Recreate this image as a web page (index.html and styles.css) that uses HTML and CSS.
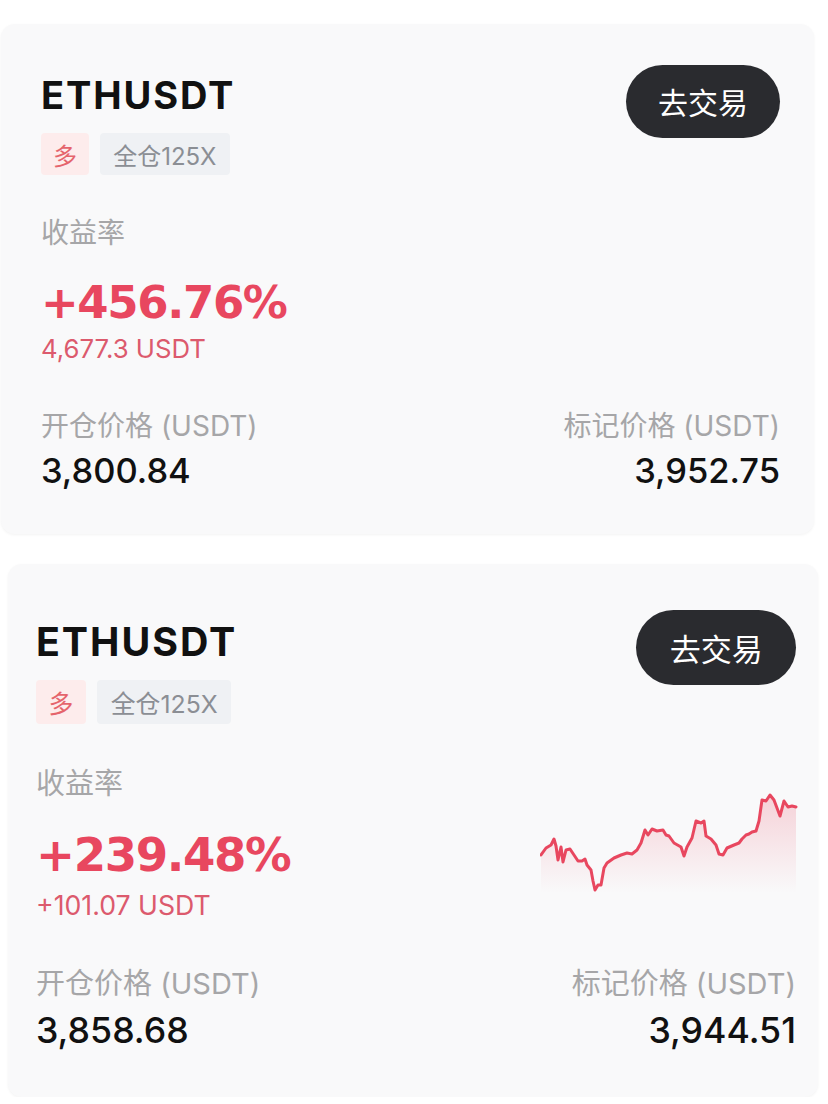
FILE: index.html
```html
<!DOCTYPE html>
<html lang="zh-CN">

<head>
  <meta charset="UTF-8" />
  <meta name="viewport" content="width=device-width, initial-scale=1.0" />
  <title>持仓分享</title>
  <link rel="stylesheet" href="styles.css">
</head>

<body>
  <div class="cards">
    <!-- First position card -->
    <div class="card card-a">
      <div class="card-head">
        <div>
          <h2 class="symbol">ETHUSDT</h2>
          <div class="tags">
            <span class="tag tag-long">多</span>
            <span class="tag tag-mode">全仓125X</span>
          </div>
        </div>
        <button class="trade-button">去交易</button>
      </div>
      <div class="pnl-row">
        <div>
          <div class="label">收益率</div>
          <div class="pnl-rate">+456.76%</div>
          <div class="pnl-amount">4,677.3 USDT</div>
        </div>
      </div>
      <div class="price-row">
        <div>
          <div class="label">开仓价格 (USDT)</div>
          <div class="price">3,800.84</div>
        </div>
        <div class="align-right">
          <div class="label">标记价格 (USDT)</div>
          <div class="price">3,952.75</div>
        </div>
      </div>
    </div>

    <!-- Second position card, with price chart -->
    <div class="card card-b">
      <div class="card-head">
        <div>
          <h2 class="symbol">ETHUSDT</h2>
          <div class="tags">
            <span class="tag tag-long">多</span>
            <span class="tag tag-mode">全仓125X</span>
          </div>
        </div>
        <button class="trade-button">去交易</button>
      </div>
      <div class="pnl-row">
        <div>
          <div class="label">收益率</div>
          <div class="pnl-rate">+239.48%</div>
          <div class="pnl-amount">+101.07 USDT</div>
        </div>
        <svg class="spark" viewBox="0 0 258 100" width="258" height="100">
          <defs>
            <linearGradient id="sparkFill" x1="0" y1="0" x2="0" y2="1">
              <stop offset="0" stop-color="#e8475f" stop-opacity="0.22" />
              <stop offset="1" stop-color="#e8475f" stop-opacity="0" />
            </linearGradient>
          </defs>
          <path fill="url(#sparkFill)" d="M1 62 L6 55 L11 52 L14 46 L16 53 L18 67 L21 54 L23 69 L26 57 L30 56 L34 62 L38 68 L42 68 L45 66 L47 72 L51 77 L53 88 L55 97 L58 92 L61 92 L64 75 L67 70 L74 65 L81 62 L87 60 L92 61 L97 57 L101 50 L105 37 L108 42 L112 36 L117 38 L123 37 L126 42 L129 43 L134 50 L141 54 L144 63 L147 54 L152 45 L156 28 L161 30 L164 28 L166 43 L171 46 L176 52 L179 61 L183 62 L187 55 L194 52 L199 50 L202 46 L206 42 L209 41 L212 39 L216 38 L219 28 L222 7 L226 8 L230 2 L234 7 L240 23 L244 8 L248 14 L252 13 L256 14 L256 100 L1 100 Z" />
          <polyline fill="none" stroke="#e8475f" stroke-width="3" stroke-linejoin="round" stroke-linecap="round" points="1,62 6,55 11,52 14,46 16,53 18,67 21,54 23,69 26,57 30,56 34,62 38,68 42,68 45,66 47,72 51,77 53,88 55,97 58,92 61,92 64,75 67,70 74,65 81,62 87,60 92,61 97,57 101,50 105,37 108,42 112,36 117,38 123,37 126,42 129,43 134,50 141,54 144,63 147,54 152,45 156,28 161,30 164,28 166,43 171,46 176,52 179,61 183,62 187,55 194,52 199,50 202,46 206,42 209,41 212,39 216,38 219,28 222,7 226,8 230,2 234,7 240,23 244,8 248,14 252,13 256,14" />
        </svg>
      </div>
      <div class="price-row">
        <div>
          <div class="label">开仓价格 (USDT)</div>
          <div class="price">3,858.68</div>
        </div>
        <div class="align-right">
          <div class="label">标记价格 (USDT)</div>
          <div class="price">3,944.51</div>
        </div>
      </div>
    </div>
  </div>
</body>

</html>
```

FILE: styles.css
```css
* {
  box-sizing: border-box;
}

body {
  margin: 0;
  background: #ffffff;
  font-family: Inter, "Noto Sans CJK SC", sans-serif;
  color: #111111;
}

.cards {
  display: flex;
  flex-direction: column;
  gap: 30px;
  padding-top: 24px;
}

.card {
  background: #f9f9fa;
  border-radius: 14px;
  box-shadow: 0 1px 3px rgba(0, 0, 0, 0.05);
}

.card-a {
  width: 813px;
  margin-left: 1px;
  padding: 41px 34px 42px 40px;
  font-size: 28px;
}

.card-b {
  width: 810px;
  margin-left: 8px;
  padding: 46px 22px 45px 28px;
  font-size: 29px;
}

.card-head {
  display: flex;
  justify-content: space-between;
  align-items: flex-start;
}

.symbol {
  margin: 0.214em 0 0;
  font-size: 1.357em;
  line-height: 1.21;
  font-weight: 700;
  letter-spacing: 0.05em;
  color: #111111;
}

.tags {
  display: flex;
  gap: 0.393em;
  margin-top: 0.5em;
}

.tag {
  display: flex;
  align-items: center;
  height: 1.75em;
  border-radius: 4px;
  font-size: 0.857em;
}

.tag-long {
  padding: 0 0.5em;
  background: #fdecec;
  color: #e5646c;
}

.tag-mode {
  padding: 0 0.55em;
  background: #eff1f4;
  color: #8b8e94;
}

.trade-button {
  height: 2.433em;
  padding: 0 1.07em;
  border: none;
  border-radius: 999px;
  background: #2a2b2f;
  color: #ffffff;
  font-family: inherit;
  font-size: 1.071em;
}

.label {
  font-size: 1em;
  line-height: 1.286em;
  color: #a6a6a8;
}

.pnl-row {
  display: flex;
  justify-content: space-between;
  align-items: center;
  margin-top: 1.429em;
}

.pnl-rate {
  margin-top: 0.578em;
  font-family: "DejaVu Sans", Inter, sans-serif;
  font-weight: 700;
  font-size: 1.607em;
  line-height: 1.156;
  letter-spacing: -0.03em;
  color: #e8475f;
}

.pnl-amount {
  margin-top: 0.2em;
  font-size: 0.92em;
  line-height: 1.2;
  color: #dc5a6d;
}

.spark {
  display: block;
  margin-right: -2px;
}

.price-row {
  display: flex;
  justify-content: space-between;
  margin-top: 1.536em;
}

.align-right {
  text-align: right;
}

.price {
  margin-top: 0.17em;
  font-size: 1.232em;
  line-height: 1.21;
  font-weight: 500;
  color: #111111;
}
```
